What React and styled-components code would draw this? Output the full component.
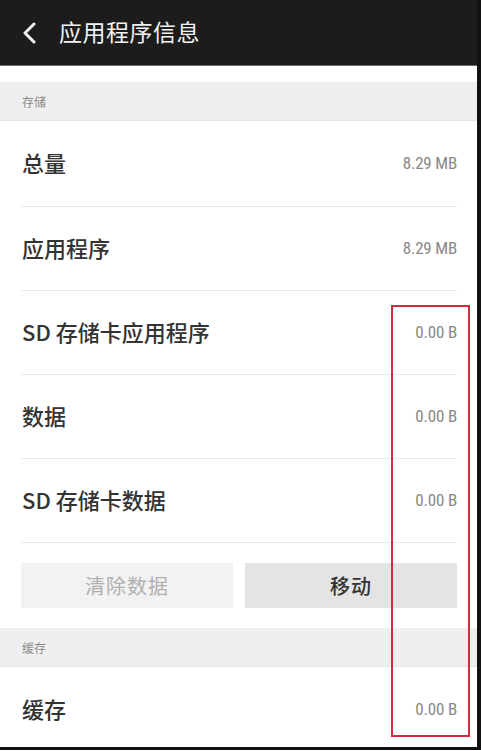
import React from 'react'
import styled, { createGlobalStyle } from 'styled-components'

const GlobalStyle = createGlobalStyle`
	*, *::before, *::after {
		box-sizing: border-box;
	}
	html, body {
		margin: 0;
		padding: 0;
		background: #ffffff;
	}
	body {
		font-family: "Noto Sans CJK SC", "Noto Sans", Roboto, sans-serif;
	}
`;

const Screen = styled.div`
	position: relative;
	width: 481px;
	height: 750px;
	border-right: 4px solid #111;
	border-bottom: 3px solid #111;
	background: #fff;
	overflow: hidden;
`;

const Header = styled.div`
	height: 66px;
	background: #1c1c1c;
	border-bottom: 1px solid #6a6a6a;
	display: flex;
	align-items: center;
	padding-left: 20px;
	gap: 19px;
	color: #f2f2f2;
`;

const HeaderTitle = styled.div`
	font-size: 23px;
	letter-spacing: 0.5px;
	line-height: 1;
	padding-bottom: 3px;
`;

const Section = styled.div`
	margin-top: ${p => p.$top}px;
	height: 39px;
	background: #efefef;
	border-bottom: 1px solid #e4e4e4;
	display: flex;
	align-items: center;
	padding-left: 22px;
	font-size: 12px;
	color: #8a8a8a;
`;

const Row = styled.div`
	height: ${p => p.$h}px;
	margin: 0 20px 0 22px;
	display: flex;
	align-items: center;
	justify-content: space-between;
	border-bottom: ${p => (p.$last ? 'none' : '1px solid #e8e8e8')};
`;

const Label = styled.div`
	font-size: 22px;
	font-weight: 500;
	color: #333;
	padding-bottom: 4px;
`;

const Value = styled.div`
	font-family: "Liberation Sans Narrow", "Roboto Condensed", Roboto, sans-serif;
	font-size: 17px;
	color: #888;
	letter-spacing: -0.2px;
	padding-bottom: 2px;
`;

const Buttons = styled.div`
	display: grid;
	grid-template-columns: 1fr 1fr;
	gap: 12px;
	margin: 20px 20px 0 21px;
`;

const Button = styled.div`
	height: 45px;
	display: flex;
	align-items: center;
	justify-content: center;
	font-size: 20px;
	background: ${p => (p.$disabled ? '#f2f2f2' : '#e4e4e4')};
	color: ${p => (p.$disabled ? '#b0b0b0' : '#333')};
	font-weight: ${p => (p.$disabled ? 400 : 500)};
	letter-spacing: 1px;
`;

const Highlight = styled.div`
	position: absolute;
	left: 391px;
	top: 305px;
	width: 79px;
	height: 432px;
	border: 2px solid #d42a40;
`;

const storage = [
	{ label: '总量', value: '8.29 MB' },
	{ label: '应用程序', value: '8.29 MB' },
	{ label: 'SD 存储卡应用程序', value: '0.00 B' },
	{ label: '数据', value: '0.00 B' },
	{ label: 'SD 存储卡数据', value: '0.00 B' },
];

function BackIcon() {
	return (
		<svg width="20" height="22" viewBox="0 0 20 22">
			<path d="M14 2 L5 11 L14 20" fill="none" stroke="#f2f2f2" strokeWidth="3" strokeLinecap="round" strokeLinejoin="round" />
		</svg>
	);
}

export default function App() {
	return (
		<>
			<GlobalStyle />
			<Screen>
				<Header>
					<BackIcon />
					<HeaderTitle>应用程序信息</HeaderTitle>
				</Header>
				<Section $top={16}>存储</Section>
				{storage.map((item, i) => (
					<Row key={item.label} $h={i === 0 ? 86 : 84}>
						<Label>{item.label}</Label>
						<Value>{item.value}</Value>
					</Row>
				))}
				<Buttons>
					<Button $disabled>清除数据</Button>
					<Button>移动</Button>
				</Buttons>
				<Section $top={20}>缓存</Section>
				<Row $h={86} $last>
					<Label>缓存</Label>
					<Value>0.00 B</Value>
				</Row>
				<Highlight />
			</Screen>
		</>
	);
}
